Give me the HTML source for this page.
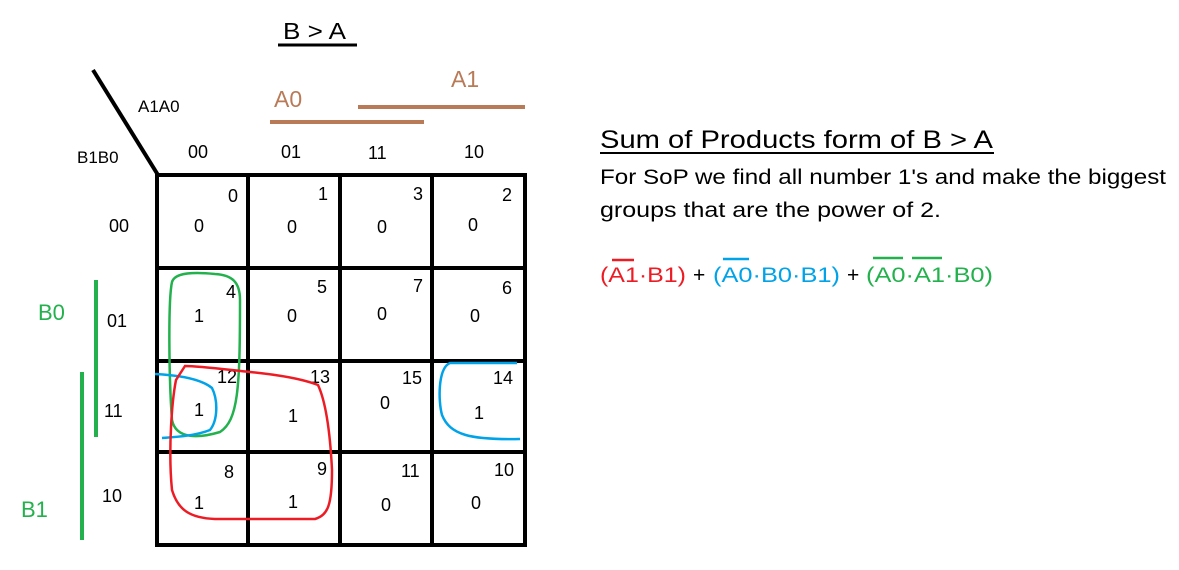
<!DOCTYPE html><html><head><style>body{margin:0;background:#fff}svg{display:block}text{font-family:"Liberation Sans",sans-serif}</style></head><body>
<svg width="1179" height="570" viewBox="0 0 1179 570" xmlns="http://www.w3.org/2000/svg">
<text x="283" y="39" font-size="23" textLength="63" lengthAdjust="spacingAndGlyphs">B &gt; A</text>
<line x1="278" y1="45" x2="357" y2="45" stroke="#000" stroke-width="3"/>
<line x1="93" y1="70" x2="158" y2="175" stroke="#000" stroke-width="4"/>
<text x="138" y="112" font-size="17">A1A0</text>
<text x="77" y="163" font-size="17">B1B0</text>
<line x1="270" y1="122" x2="424" y2="122" stroke="#b97a57" stroke-width="4"/>
<line x1="358" y1="107" x2="525" y2="107" stroke="#b97a57" stroke-width="4"/>
<text x="274" y="107" font-size="23" fill="#b97a57">A0</text>
<text x="451" y="87" font-size="23" fill="#b97a57">A1</text>
<g font-size="18">
<text x="188" y="158">00</text><text x="281" y="158">01</text><text x="368" y="159">11</text><text x="464" y="158">10</text>
<text x="109" y="232">00</text><text x="107" y="327">01</text><text x="104" y="417">11</text><text x="102" y="502">10</text>
</g>
<line x1="96" y1="280" x2="96" y2="437" stroke="#22b14c" stroke-width="4"/>
<line x1="82" y1="372" x2="82" y2="540" stroke="#22b14c" stroke-width="4"/>
<text x="38" y="320" font-size="22" fill="#22b14c">B0</text>
<text x="21" y="517" font-size="22" fill="#22b14c">B1</text>
<g stroke="#000" stroke-width="4">
<line x1="157" y1="175" x2="525" y2="175"/><line x1="157" y1="268" x2="525" y2="268"/><line x1="157" y1="361" x2="525" y2="361"/><line x1="157" y1="452" x2="525" y2="452"/><line x1="157" y1="545" x2="527" y2="545"/>
<line x1="157" y1="173" x2="157" y2="547"/><line x1="248" y1="173" x2="248" y2="547"/><line x1="340" y1="173" x2="340" y2="547"/><line x1="432" y1="173" x2="432" y2="547"/><line x1="525" y1="173" x2="525" y2="547"/>
</g>
<g font-size="18">
<text x="228" y="202">0</text><text x="194" y="232">0</text>
<text x="318" y="200">1</text><text x="287" y="233">0</text>
<text x="413" y="200">3</text><text x="377" y="233">0</text>
<text x="502" y="201">2</text><text x="468" y="231">0</text>
<text x="226" y="298">4</text><text x="194" y="322">1</text>
<text x="317" y="293">5</text><text x="287" y="322">0</text>
<text x="413" y="292">7</text><text x="377" y="320">0</text>
<text x="502" y="294">6</text><text x="470" y="322">0</text>
<text x="217" y="383">12</text><text x="194" y="416">1</text>
<text x="310" y="383">13</text><text x="288" y="422">1</text>
<text x="402" y="384">15</text><text x="380" y="409">0</text>
<text x="493" y="384">14</text><text x="474" y="419">1</text>
<text x="224" y="478">8</text><text x="194" y="509">1</text>
<text x="317" y="475">9</text><text x="288" y="508">1</text>
<text x="401" y="477">11</text><text x="381" y="511">0</text>
<text x="494" y="476">10</text><text x="471" y="509">0</text>
</g>
<path d="M172 282 C168 300 169 380 172 420 C176 440 200 438 220 432 C238 420 240 390 240 300 C240 282 232 275 215 274 C195 272 175 272 172 282 Z" fill="none" stroke="#22b14c" stroke-width="2.5"/>
<path d="M155 374 C175 375 200 378 212 388 C218 400 218 420 210 430 C195 436 175 437 162 438" fill="none" stroke="#00a2e8" stroke-width="2.5"/>
<path d="M517 363 L450 363 C438 368 438 400 442 415 C450 435 470 440 520 439" fill="none" stroke="#00a2e8" stroke-width="2.5"/>
<path d="M185 366 L176 380 C172 400 168 450 172 490 C178 510 190 518 215 519 L315 519 C328 515 332 505 332 470 C330 430 325 400 318 385 C300 378 270 374 250 372 C230 370 200 366 185 366 Z" fill="none" stroke="#ed1c24" stroke-width="2.5"/>
<text x="600" y="148" font-size="25" textLength="393" lengthAdjust="spacingAndGlyphs">Sum of Products form of B &gt; A</text>
<line x1="600" y1="153" x2="994" y2="153" stroke="#000" stroke-width="2"/>
<text x="600" y="184" font-size="21" textLength="566" lengthAdjust="spacingAndGlyphs">For SoP we find all number 1's and make the biggest</text>
<text x="600" y="217" font-size="21" textLength="341" lengthAdjust="spacingAndGlyphs">groups that are the power of 2.</text>
<g font-size="21">
<text x="600" y="282" fill="#ed1c24" textLength="86" lengthAdjust="spacingAndGlyphs">(A1·B1)</text>
<text x="693" y="282">+</text>
<text x="713" y="282" fill="#00a2e8" textLength="127" lengthAdjust="spacingAndGlyphs">(A0·B0·B1)</text>
<text x="847" y="282">+</text>
<text x="866" y="282" fill="#22b14c" textLength="127" lengthAdjust="spacingAndGlyphs">(A0·A1·B0)</text>
</g>
<line x1="612" y1="260" x2="634" y2="260" stroke="#ed1c24" stroke-width="2.5"/>
<line x1="723" y1="259" x2="749" y2="259" stroke="#00a2e8" stroke-width="2.5"/>
<line x1="873" y1="258" x2="903" y2="258" stroke="#22b14c" stroke-width="2.5"/>
<line x1="912" y1="258" x2="942" y2="258" stroke="#22b14c" stroke-width="2.5"/>
</svg></body></html>
